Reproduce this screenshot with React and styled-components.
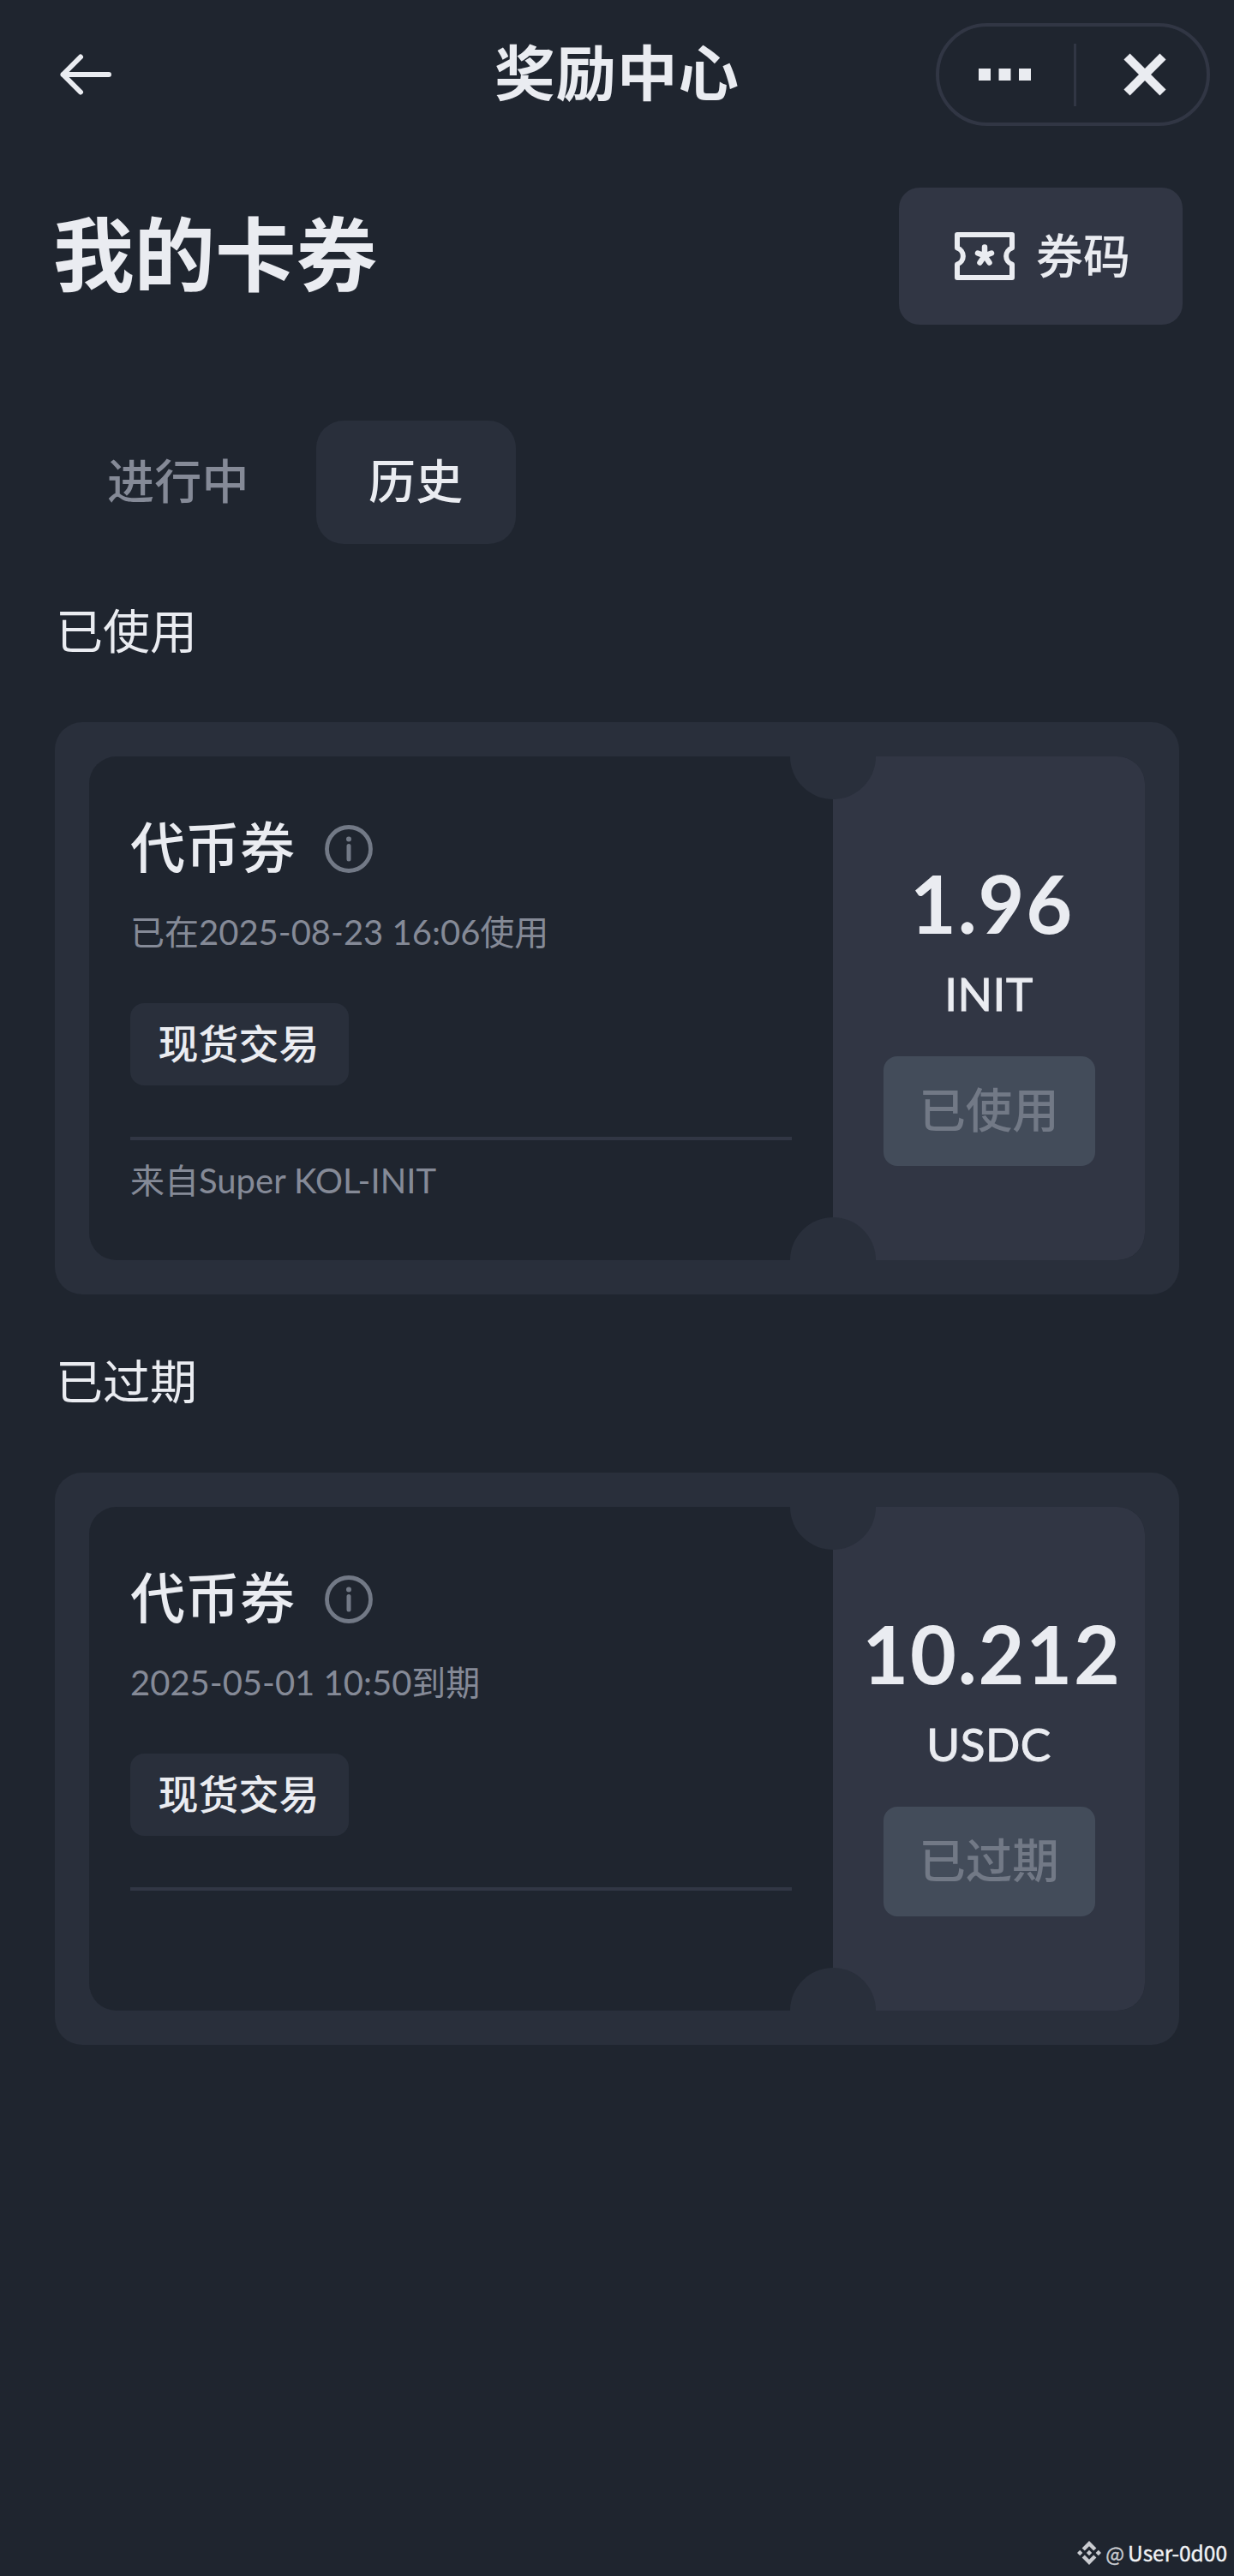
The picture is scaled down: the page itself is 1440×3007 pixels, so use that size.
import React from 'react';
import styled, { createGlobalStyle } from 'styled-components'

const GlobalStyle = createGlobalStyle`
    *{
        box-sizing: border-box;
        margin: 0;
        padding: 0;
    }
    body{
        background-color: #1F252F;
        color: #EAECF1;
        font-family: "Lato", "Noto Sans CJK SC", sans-serif;
    }
    button{
        border: none;
        font-family: inherit;
        color: inherit;
    }
    svg{
        display: block;
        flex-shrink: 0;
    }
`

const Page = styled.div`
    width: 1440px;
    height: 3007px;
    display: flex;
    flex-direction: column;
    overflow: hidden;
`

const Header = styled.header`
    height: 174px;
    padding: 0 28px 0 64px;
    display: grid;
    grid-template-columns: 1fr auto 1fr;
    align-items: center;
`

const HeaderTitle = styled.h2`
    font-size: 70.500px;
    line-height: 90px;
    font-weight: 700;
    letter-spacing: 1px;
    padding-bottom: 4px;
    margin-right: 36px;
`

const Capsule = styled.div`
    width: 320px;
    height: 120px;
    justify-self: end;
    display: flex;
    align-items: center;
    border: 4px solid #313644;
    border-radius: 60px;
`

const CapsuleButton = styled.button`
    width: ${props => props.$width}px;
    height: 100%;
    display: flex;
    align-items: center;
    justify-content: center;
    background: none;
    padding-left: ${props => props.$left || 0}px;
    padding-right: ${props => props.$right || 0}px;
`

const CapsuleLine = styled.div`
    width: 3px;
    height: 73px;
    background-color: #313644;
`

const Top = styled.div`
    margin-top: 45px;
    height: 160px;
    padding: 0 60px 0 62px;
    display: flex;
    align-items: center;
    justify-content: space-between;
    h1{
        font-size: 94.500px;
        line-height: 120px;
        font-weight: 700;
        padding-bottom: 5px;
    }
`

const CodeButton = styled.button`
    width: 331px;
    height: 160px;
    display: flex;
    align-items: center;
    justify-content: center;
    gap: 25px;
    padding-left: 4px;
    border-radius: 24px;
    background-color: #313644;
    font-size: 55px;
    line-height: 70px;
    font-weight: 500;
    span{
        padding-bottom: 3px;
    }
`

const Tabs = styled.div`
    display: flex;
    gap: 17px;
    margin: 112px 0 0 64px;
`

const Tab = styled.button`
    height: 144px;
    padding: 0 61px 10px;
    border-radius: 32px;
    font-size: 55px;
    font-weight: 500;
    letter-spacing: 0.300px;
    color: ${props => props.$active ? '#EAECF1' : '#858A97'};
    background-color: ${props => props.$active ? '#292F3B' : 'transparent'};
`

const SectionTitle = styled.h3`
    margin: 61px 0 67px 65px;
    font-size: 55px;
    line-height: 80px;
    font-weight: 400;
`

const Card = styled.div`
    width: 1312px;
    height: 668px;
    margin-left: 64px;
    padding: 40px;
    border-radius: 32px;
    background-color: #292F3B;
`

const Ticket = styled.div`
    position: relative;
    height: 588px;
    display: flex;
    border-radius: 32px;
    overflow: hidden;
    background-color: #1F252F;
`

const Notch = styled.div`
    position: absolute;
    left: 818px;
    ${props => props.$side}: -50px;
    width: 100px;
    height: 100px;
    border-radius: 50%;
    background-color: #292F3B;
`

const Info = styled.div`
    width: 868px;
    padding: 66px 48px 0;
`

const Name = styled.div`
    display: flex;
    align-items: center;
    gap: 35px;
    font-size: 64px;
    line-height: 80px;
    font-weight: 500;
    svg{
        margin-top: 4px;
    }
`

const Note = styled.p`
    margin-top: ${props => props.$top}px;
    font-size: 40px;
    line-height: 56px;
    color: #858A97;
`

const Tag = styled.div`
    width: 255px;
    height: 96px;
    margin-top: 55px;
    padding: 0 2px 8px 0;
    display: flex;
    align-items: center;
    justify-content: center;
    border-radius: 16px;
    background-color: #292F3B;
    font-size: 47px;
    font-weight: 500;
`

const Divider = styled.div`
    height: 4px;
    margin-top: 60px;
    background-color: #313644;
`

const Worth = styled.div`
    flex: 1;
    padding-top: 116px;
    display: flex;
    flex-direction: column;
    align-items: center;
    background-color: #313644;
`

const Amount = styled.div`
    padding-left: 7px;
    font-size: 93px;
    line-height: 110px;
    font-weight: 700;
    letter-spacing: 1.800px;
`

const Unit = styled.div`
    margin-top: 19px;
    font-size: 53px;
    line-height: 64px;
    letter-spacing: ${props => props.children.length > 3 ? 0.500 : 0}px;
    -webkit-text-stroke: 1px #EAECF1;
`

const Status = styled.button`
    width: 247px;
    height: 128px;
    margin-top: 41px;
    padding-bottom: 10px;
    border-radius: 16px;
    background-color: #434C5A;
    color: #727986;
    font-size: 54.500px;
    font-weight: 500;
`

const Watermark = styled.footer`
    margin: auto 8px 10px auto;
    display: flex;
    align-items: center;
    font-family: "Noto Sans CJK SC", sans-serif;
    font-size: 24.500px;
    line-height: 34px;
    font-weight: 400;
    color: #F2F3F5;
    -webkit-text-stroke: 0.400px;
    span{
        margin: 0 4px 0 5px;
        font-size: 23px;
        color: #C9CBD0;
    }
`

const BackIcon = () => (
    <svg width="66" height="50" viewBox="0 0 66 50" fill="none" stroke="#EAECF1" strokeWidth="6" strokeLinecap="round" strokeLinejoin="round">
        <path d="M30 4.500L9.500 25L30 45.500M9.500 25H63" />
    </svg>
)

const DotsIcon = () => (
    <svg width="61" height="14" viewBox="0 0 61 14" fill="#EAECF1">
        <path d="M0 0H14V14H0ZM23.500 0H37.500V14H23.500ZM47 0H61V14H47Z" />
    </svg>
)

const CloseIcon = () => (
    <svg width="50" height="50" viewBox="0 0 50 50" stroke="#EAECF1" strokeWidth="10">
        <path d="M4 4L46 46M46 4L4 46" />
    </svg>
)

const TicketIcon = () => (
    <svg width="70" height="56" viewBox="0 0 70 56" fill="none" stroke="#EAECF1" strokeWidth="6" strokeLinejoin="round">
        <path d="M3 3H67V18.500A10 10 0 0 0 67 37.500V53H3V37.500A10 10 0 0 0 3 18.500Z" />
        <path d="M35 27.500V17.500M35 27.500L27 24.500M35 27.500L43 24.500M35 27.500L29.500 35.500M35 27.500L40.500 35.500" strokeLinecap="round" strokeWidth="6.500" />
    </svg>
)

const InfoIcon = () => (
    <svg width="56" height="56" viewBox="0 0 56 56" fill="none" stroke="#727986" strokeWidth="4.800">
        <circle cx="28" cy="28" r="25.500" />
        <path d="M28 24.500V40" strokeWidth="5" strokeLinecap="round" />
        <circle cx="28" cy="16.500" r="3" fill="#727986" stroke="none" />
    </svg>
)

const LogoIcon = () => (
    <svg width="28" height="28" viewBox="0 0 28 28" fill="#C9CBD0">
        <path d="M14 0L22.400 8.400L19.200 11.500L14 6.300L8.800 11.500L5.600 8.400ZM14 28L5.600 19.600L8.800 16.500L14 21.700L19.200 16.500L22.400 19.600ZM14 10.800L17.200 14L14 17.200L10.800 14ZM3.200 10.800L6.400 14L3.200 17.200L0 14ZM24.800 10.800L28 14L24.800 17.200L21.600 14Z" />
    </svg>
)

function Coupon({ note, source, amount, unit, status }) {
    return (
        <Card>
            <Ticket>
                <Info>
                    <Name>代币券<InfoIcon /></Name>
                    <Note $top={31}>{note}</Note>
                    <Tag>现货交易</Tag>
                    <Divider />
                    {source && <Note $top={19}>{source}</Note>}
                </Info>
                <Worth>
                    <Amount>{amount}</Amount>
                    <Unit>{unit}</Unit>
                    <Status>{status}</Status>
                </Worth>
                <Notch $side="top" />
                <Notch $side="bottom" />
            </Ticket>
        </Card>
    )
}

export default function App() {
    return (
        <Page>
            <GlobalStyle />
            <Header>
                <BackIcon />
                <HeaderTitle>奖励中心</HeaderTitle>
                <Capsule>
                    <CapsuleButton $width={157} $right={5}><DotsIcon /></CapsuleButton>
                    <CapsuleLine />
                    <CapsuleButton $width={152} $left={8}><CloseIcon /></CapsuleButton>
                </Capsule>
            </Header>
            <Top>
                <h1>我的卡券</h1>
                <CodeButton><TicketIcon /><span>券码</span></CodeButton>
            </Top>
            <Tabs>
                <Tab>进行中</Tab>
                <Tab $active>历史</Tab>
            </Tabs>
            <SectionTitle>已使用</SectionTitle>
            <Coupon
                note="已在2025-08-23 16:06使用"
                source="来自Super KOL-INIT"
                amount="1.96"
                unit="INIT"
                status="已使用"
            />
            <SectionTitle>已过期</SectionTitle>
            <Coupon
                note="2025-05-01 10:50到期"
                amount="10.212"
                unit="USDC"
                status="已过期"
            />
            <Watermark>
                <LogoIcon />
                <span>@</span>User-0d00
            </Watermark>
        </Page>
    )
}
